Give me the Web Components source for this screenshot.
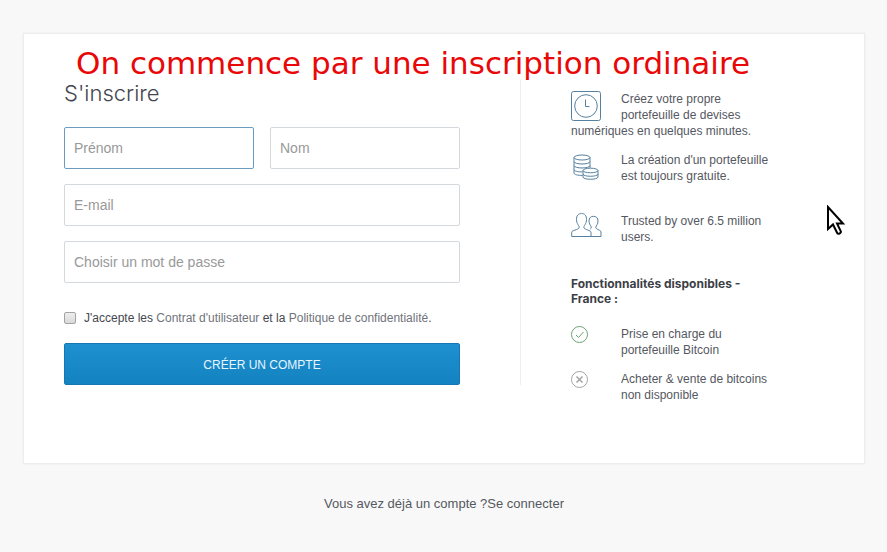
<!DOCTYPE html>
<html lang="fr">
<head>
<meta charset="utf-8">
<meta name="viewport" content="width=device-width, initial-scale=1">
<title>S'inscrire</title>
<style>
body { margin: 0; background: #f8f8f8; font-family: "Liberation Sans", Arial, sans-serif; color: #4a4d55; }
</style>
</head>
<body>
<signup-page></signup-page>
<script>
const define = (name, html, setup) => {
  const template = document.createElement('template');
  template.innerHTML = html;
  customElements.define(name, class extends HTMLElement {
    connectedCallback() {
      if (this.shadowRoot) return;
      const root = this.attachShadow({ mode: 'open' });
      root.append(template.content.cloneNode(true));
      if (setup) setup(this, root);
    }
  });
};

define('text-field', `
<style>
:host { display: block; min-width: 0; }
input { display: block; box-sizing: border-box; width: 100%; height: 42px; padding: 0 9px; border: 1px solid #d4d9dd; border-radius: 2px; background: #fff; font: 14px "Liberation Sans", Arial, sans-serif; color: #4a4d55; outline: none; }
input::placeholder { color: #999; opacity: 1; }
:host([active]) input, input:focus { border-color: #6a9cc0; }
</style>
<input>`, (host, root) => {
  const input = root.querySelector('input');
  input.type = host.getAttribute('type') || 'text';
  input.placeholder = host.getAttribute('label');
  input.setAttribute('aria-label', host.getAttribute('label'));
});

define('submit-button', `
<style>
:host { display: block; }
button { display: block; width: 100%; height: 42px; padding: 2px 0 0; border: 1px solid #1577b3; border-radius: 2px; background: linear-gradient(#1e90d0, #1482c0); color: #e6f6ff; font: 12px "Liberation Sans", Arial, sans-serif; text-transform: uppercase; }
</style>
<button type="submit"><slot></slot></button>`);

define('terms-check', `
<style>
:host { display: flex; align-items: center; gap: 8px; font-size: 12px; line-height: 16px; color: #44474f; }
input { appearance: none; flex: none; box-sizing: border-box; width: 12px; height: 12px; margin: 0; border: 1px solid #a3a3a3; border-radius: 2px; background: linear-gradient(#eee, #d9d9d9); }
input:checked { background: #1482c0; }
a { color: #70737a; text-decoration: none; }
</style>
<input type="checkbox" id="terms">
<label for="terms">J'accepte les <a href="#contrat">Contrat d'utilisateur</a> et la <a href="#politique">Politique de confidentialité</a>.</label>`);

define('signup-form', `
<style>
:host { display: block; }
h1 { margin: 0 0 21px; font: 300 22px/26px Inter, sans-serif; color: #44464f; }
form { display: grid; grid-template-columns: 1fr 1fr; gap: 15px 16px; }
.wide { grid-column: 1 / -1; }
terms-check { margin: 12px 0 2px; }
</style>
<h1>S'inscrire</h1>
<form>
  <text-field label="Prénom" active></text-field>
  <text-field label="Nom"></text-field>
  <text-field class="wide" label="E-mail" type="email"></text-field>
  <text-field class="wide" label="Choisir un mot de passe" type="password"></text-field>
  <terms-check class="wide"></terms-check>
  <submit-button class="wide">Créer un compte</submit-button>
</form>`);

define('feature-item', `
<style>
:host { display: flow-root; min-height: 48px; font-size: 12px; line-height: 16px; color: #55585f; }
:host([compact]) { min-height: 32px; }
.icon { float: left; width: 31px; height: 31px; margin-right: 19px; }
p { margin: 0; }
::slotted(svg) { display: block; }
</style>
<div class="icon"><slot name="icon"></slot></div>
<p><slot></slot></p>`);

define('feature-list', `
<style>
:host { display: block; }
.list { display: grid; gap: 13px; }
h2 { margin: 15px 0 20px; font: bold 12px/15px Inter, sans-serif; color: #3c3f46; }
svg { fill: none; stroke: #56809f; stroke-width: 1; }
</style>
<div class="list">
  <feature-item>
    <svg slot="icon" width="31" height="31" viewBox="0 0 31 31"><rect x=".5" y=".5" width="29" height="29" rx="2"/><circle cx="15" cy="15" r="11.3"/><path d="M14.5 8.5v7h4"/></svg>
    Créez votre propre portefeuille de devises numériques en quelques minutes.
  </feature-item>
  <feature-item>
    <svg slot="icon" width="31" height="31" viewBox="0 0 31 31"><ellipse cx="11" cy="5.500" rx="8" ry="2.500"/><path d="M3 5.500v4c0 3.300 16 3.300 16 0v-4M3 9.500v4c0 3.300 16 3.300 16 0v-4M3 13.500v4c0 1.700 4 2.500 8.500 2.400M19 13.500v2.500M3 17.500v3.500c0 1.600 4 2.500 8.500 2.400"/><ellipse cx="19.500" cy="18.500" rx="7.500" ry="2.300"/><path d="M12 18.500v3.500c0 3 15 3 15 0v-3.500M12 22v3c0 3 15 3 15 0v-3"/></svg>
    La création d'un portefeuille est toujours gratuite.
  </feature-item>
  <feature-item>
    <svg slot="icon" width="31" height="31" viewBox="0 0 31 31"><path d="M.7 23.500v-4.200c0-2 6.500-2.600 7.300-4.300.5-1.300-.3-2.200-1-3.300-.8-1.300-1.500-3-1.500-5.200C5.500 2.500 7.300.5 10.500.5s5 2 5 6c0 2.200-.7 3.900-1.500 5.200-.7 1.100-1.500 2-1 3.300.8 1.700 7 2.300 7 4.300v4.200z"/><path d="M18 8c0-3 1.700-4.700 4.500-4.700S27 5 27 8c0 3.300-1.700 4.500-2.200 6-.5 2.700 5.200 2.700 5.200 5v4.500H20M18 8c0 2.500 1.200 4 2 5.200.5 1.300.2 2.300-.8 3"/></svg>
    Trusted by over 6.5 million users.
  </feature-item>
</div>
<h2>Fonctionnalités disponibles - France :</h2>
<div class="list">
  <feature-item compact>
    <svg slot="icon" width="18" height="18" viewBox="0 0 18 18" style="stroke:#6da272"><circle cx="8.500" cy="8.500" r="8"/><path d="M5 9l2.500 2.500L12.500 6"/></svg>
    Prise en charge du portefeuille Bitcoin
  </feature-item>
  <feature-item compact>
    <svg slot="icon" width="18" height="18" viewBox="0 0 18 18" style="stroke:#a3a3a3"><circle cx="8.500" cy="8.500" r="8"/><path stroke-width="1.500" d="M5.500 5.500l6 6M11.500 5.500l-6 6"/></svg>
    Acheter &amp; vente de bitcoins non disponible
  </feature-item>
</div>`);

define('signup-card', `
<style>
:host { display: grid; grid-template-columns: minmax(0, 1fr) 303px; padding: 46px 40px 60px; background: #fff; border: 1px solid #ededed; box-shadow: 0 0 2px #e8e8e8; }
signup-form { align-self: start; padding-right: 60px; border-right: 1px solid #eee; }
aside { padding: 11px 49px 0 50px; }
</style>
<signup-form></signup-form>
<aside><feature-list></feature-list></aside>`);

define('note-banner', `
<style>
:host { position: absolute; left: 76px; top: 44px; font: 31px/38px "DejaVu Sans", sans-serif; color: #e80808; white-space: nowrap; }
</style>
<slot></slot>`);

define('mouse-pointer', `
<style>
:host { position: absolute; left: 826px; top: 205px; pointer-events: none; }
svg { display: block; }
</style>
<svg width="20" height="32" viewBox="0 0 20 32"><path d="M2 2v22l5-4.500 4.200 8.500c.8 1.600 4.300.3 3.600-1.600L11 18.500h6z" fill="#fff" stroke="#000" stroke-width="2"/></svg>`);

define('signup-page', `
<style>
:host { display: block; padding: 33px 22px 40px 23px; }
footer { margin-top: 32px; text-align: center; font-size: 13px; line-height: 16px; color: #55585f; }
a { color: inherit; text-decoration: none; }
</style>
<main><signup-card></signup-card></main>
<footer>Vous avez déjà un compte ?<a href="#connexion">Se connecter</a></footer>
<note-banner>On commence par une inscription ordinaire</note-banner>
<mouse-pointer></mouse-pointer>`);
</script>
</body>
</html>
